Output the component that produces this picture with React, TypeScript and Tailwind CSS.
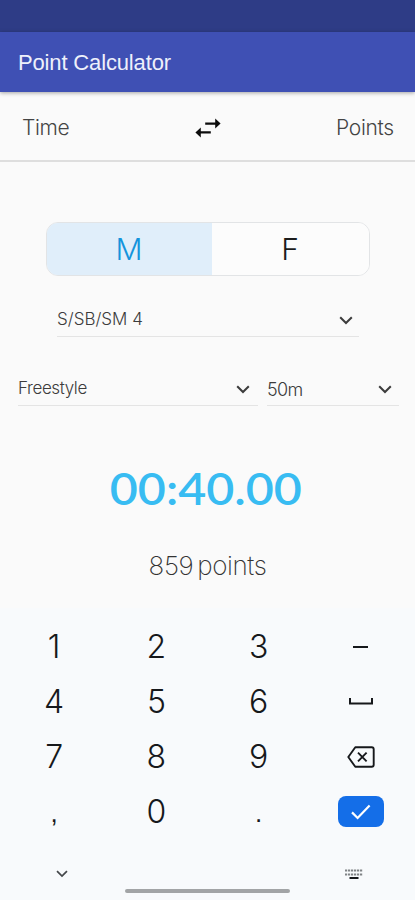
import React, { useState } from 'react';

type Gender = 'M' | 'F';

const ChevronIcon: React.FC<{ className?: string }> = ({ className }) => (
  <svg viewBox="0 0 14 9" fill="none" stroke="currentColor" strokeWidth="2" className={className}>
    <path d="M1.2 1.2 7 7l5.8-5.8" />
  </svg>
);

const SwapIcon = () => (
  <svg width="26" height="20" viewBox="0 0 26 20" fill="#0c0c0c">
    <path d="M10.2 4.4h10V.6L25.6 5.600 20.200 10.600V6.800h-10z" />
    <path d="M15.800 13.200h-10V9.400L.4 14.400l5.400 5v-3.800h10z" />
  </svg>
);

const SpaceIcon = () => (
  <svg width="24" height="7" viewBox="0 0 24 7" fill="none" stroke="#16181b" strokeWidth="2">
    <path d="M1 0v5.500h22V0" />
  </svg>
);

const BackspaceIcon = () => (
  <svg width="28" height="22" viewBox="0 0 28 22" fill="none" stroke="#16181b" strokeWidth="1.900">
    <path d="M8.300 1.200h16.400a2 2 0 0 1 2 2v15.600a2 2 0 0 1-2 2H8.300L1.300 11z" strokeLinejoin="round" />
    <path d="m11 6.700 8.600 8.600M19.600 6.700 11 15.300" />
  </svg>
);

const KeyboardIcon = () => (
  <svg width="18" height="10" viewBox="0 0 18 10" fill="none" stroke="#808386">
    <path d="M0 1.500h18M0 5.500h18" strokeWidth="2" strokeDasharray="2.200 .8" />
    <path d="M4.500 9h9" stroke="#16181b" strokeWidth="2" />
  </svg>
);

interface SelectFieldProps {
  label: string;
  className: string;
  labelClassName: string;
}

const SelectField: React.FC<SelectFieldProps> = ({ label, className, labelClassName }) => (
  <button className={`flex h-9 items-center justify-between border-b border-[#e4e4e4] pt-[3px] text-[#3c3c3c] ${className}`}>
    <span className={`whitespace-nowrap ${labelClassName}`}>{label}</span>
    <ChevronIcon className="h-[9px] w-[14px]" />
  </button>
);

const KEYS: { id: string; content: React.ReactNode }[] = [
  { id: '1', content: '1' },
  { id: '2', content: '2' },
  { id: '3', content: '3' },
  { id: 'dash', content: <span className="h-[2px] w-[15px] bg-[#16181b]" /> },
  { id: '4', content: '4' },
  { id: '5', content: '5' },
  { id: '6', content: '6' },
  { id: 'space', content: <SpaceIcon /> },
  { id: '7', content: '7' },
  { id: '8', content: '8' },
  { id: '9', content: '9' },
  { id: 'backspace', content: <BackspaceIcon /> },
  { id: 'comma', content: <span className="pt-1 font-['Liberation_Sans',sans-serif] text-[26px] font-normal">,</span> },
  { id: '0', content: '0' },
  { id: 'dot', content: <span className="pt-1 font-['Liberation_Sans',sans-serif] text-[26px] font-normal">.</span> },
  {
    id: 'done',
    content: (
      <span className="flex h-[31px] w-[46px] items-center justify-center rounded-lg bg-[#146ee8]">
        <svg width="20" height="16" viewBox="0 0 20 16" fill="none" stroke="#fff" strokeWidth="2.200">
          <path d="m1 8.400 5.600 5.600L18.600 1.600" />
        </svg>
      </span>
    ),
  },
];

const GenderToggle = () => {
  const [gender, setGender] = useState<Gender>('M');
  const options: Gender[] = ['M', 'F'];

  return (
    <div className="mx-auto flex h-[54px] w-[324px] overflow-hidden rounded-xl border border-[#e2e4e6]">
      {options.map((option) => (
        <button
          key={option}
          onClick={() => setGender(option)}
          className={`pt-px text-[30px] font-light first:w-[165px] last:flex-1 ${
            gender === option ? 'bg-[#e0eefa] text-[#1494dc]' : 'bg-[#fcfcfc] text-[#1c1c1c]'
          }`}
        >
          {option}
        </button>
      ))}
    </div>
  );
};

const App: React.FC = () => {
  return (
    <div className="flex h-[900px] w-[415px] flex-col overflow-hidden bg-[#fafafa] font-['Inter',sans-serif]">
      <div className="h-8 shrink-0 bg-[#2e3c86]" />
      <header className="relative flex h-[60px] shrink-0 items-center bg-[#3f50b4] px-[18px] shadow-[0_1px_4px_rgba(0,0,0,0.35)]">
        <h1 className="font-['Liberation_Sans',sans-serif] text-[22px] tracking-[-0.15px] text-[#eef0fb]">Point Calculator</h1>
      </header>

      <div className="flex h-[70px] shrink-0 items-center justify-between border-b-2 border-[#dedede] pt-[3px] pr-[19px] pl-[22px] text-[21px] font-light text-[#444]">
        <span className="w-[58px] tracking-[-0.4px]">Time</span>
        <SwapIcon />
        <span className="w-[60px] tracking-[-0.3px]">Points</span>
      </div>

      <main className="flex h-[446px] shrink-0 flex-col pt-[60px]">
        <GenderToggle />
        <SelectField label="S/SB/SM 4" className="mt-[25px] ml-[57px] w-[302px] pr-[6px]" labelClassName="text-[17px] font-light" />
        <div className="mt-[33px] flex gap-[9px] pl-[18px]">
          <SelectField label="Freestyle" className="w-[240px] pr-[8px]" labelClassName="text-[17px] font-light tracking-[-0.4px]" />
          <SelectField label="50m" className="w-[132px] pr-[7px]" labelClassName="text-[18px] font-light tracking-[-0.6px]" />
        </div>
        <div className="mt-[58px] h-[48px] scale-x-[1.1] pr-[3px] text-center font-['Lato',sans-serif] text-[44px] leading-[48px] font-semibold text-[#38bcf2]">
          00:40.00
        </div>
        <div className="mt-[38px] h-[32px] text-center text-[26px] leading-[32px] font-extralight tracking-[-0.4px] [word-spacing:-3px] text-[#333]">
          859 points
        </div>
      </main>

      <section className="flex flex-1 flex-col bg-[#f8fafc] pt-[11px]">
        <div className="grid h-[220px] grid-cols-4 px-[3px] text-[32px] font-light text-[#16181b]">
          {KEYS.map((key) => (
            <button key={key.id} className="flex h-[55px] items-center justify-center">
              {key.content}
            </button>
          ))}
        </div>
        <div className="mt-[30px] flex items-center justify-between pr-[52px] pl-[56px] text-[#44474a]">
          <ChevronIcon className="h-[8px] w-[12px]" />
          <KeyboardIcon />
        </div>
        <div className="mx-auto mt-[10px] h-[4px] w-[165px] rounded-full bg-[#a2a4a6]" />
      </section>
    </div>
  );
};

export default App;
